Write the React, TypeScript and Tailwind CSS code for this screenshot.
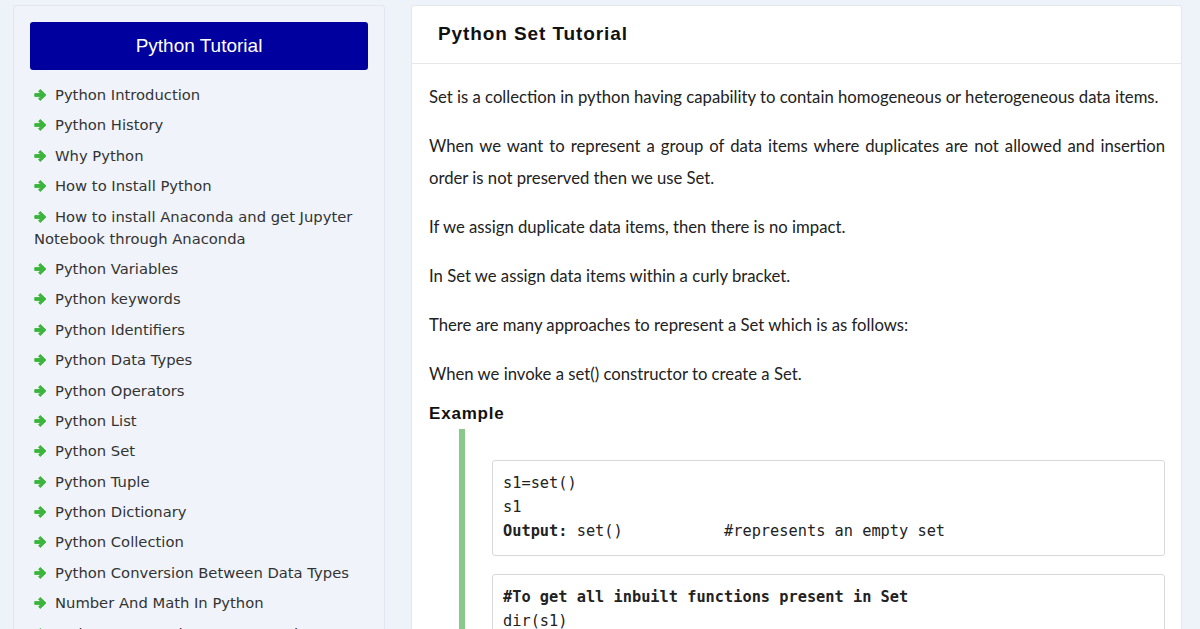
import React from "react";

const items: string[] = [
  "Python Introduction",
  "Python History",
  "Why Python",
  "How to Install Python",
  "How to install Anaconda and get Jupyter Notebook through Anaconda",
  "Python Variables",
  "Python keywords",
  "Python Identifiers",
  "Python Data Types",
  "Python Operators",
  "Python List",
  "Python Set",
  "Python Tuple",
  "Python Dictionary",
  "Python Collection",
  "Python Conversion Between Data Types",
  "Number And Math In Python",
  "Python Input And Output Operations",
];

const paras = [
  "Set is a collection in python having capability to contain homogeneous or heterogeneous data items.",
  "When we want to represent a group of data items where duplicates are not allowed and insertion order is not preserved then we use Set.",
  "If we assign duplicate data items, then there is no impact.",
  "In Set we assign data items within a curly bracket.",
  "There are many approaches to represent a Set which is as follows:",
  "When we invoke a set() constructor to create a Set.",
];

function Arrow() {
  return (
    <svg
      width="13"
      height="12"
      viewBox="0 0 13 12"
      className="mr-[8px] inline-block align-[-1px]"
    >
      <path
        d="M0.8 4.6 H7 L4.6 2.2 L6.3 0.6 L11.9 6 L6.3 11.4 L4.6 9.8 L7 7.4 H0.8 Z"
        fill="#3cb53c"
        stroke="#3cb53c"
        strokeWidth="1"
        strokeLinejoin="round"
      />
    </svg>
  );
}

export default function App() {
  return (
    <div className="h-[629px] w-[1200px] overflow-hidden bg-[#eef2f9]">
      <div className="flex items-start gap-[26px] pl-[13px] pt-[5px]">
        <aside className="w-[372px] shrink-0 rounded-[3px] border border-[#e2e7ef] bg-[#f0f4fa] px-[16px] pt-[16px] pb-6">
          <div className="flex h-[48px] w-[338px] items-center justify-center rounded-[3px] bg-[#00009e] text-[19px] text-white [font-family:'Liberation_Sans',Arial,sans-serif]">
            Python Tutorial
          </div>
          <ul className="mt-[14px] pl-[4px] pr-[8px] text-[14.75px] leading-[22px] text-[#333] [font-family:'DejaVu_Sans',Verdana,sans-serif]">
            {items.map((t) => (
              <li key={t} className="mb-[8.4px]">
                <Arrow />
                {t}
              </li>
            ))}
          </ul>
        </aside>
        <main className="h-[700px] w-[771px] shrink-0 rounded-[3px] border border-[#e3e6eb] bg-white">
          <div className="flex h-[58px] items-center border-b border-[#e6e6e6] pl-[26px]">
            <h1 className="text-[19px] font-bold tracking-[0.9px] text-[#111] [font-family:'Liberation_Sans',Arial,sans-serif]">
              Python Set Tutorial
            </h1>
          </div>
          <div className="pl-[17px] pr-[16px] pt-[17px] [font-family:Lato,sans-serif] text-[16.7px] leading-[32px] text-[#222]">
            {paras.map((p, i) => (
              <p key={i} className="mb-[17px] text-justify">
                {p}
              </p>
            ))}
            <h2 className="mt-[-5px] text-[17px] font-bold leading-[24px] tracking-[0.8px] text-[#111] [font-family:'Liberation_Sans',Arial,sans-serif]">
              Example
            </h2>
            <div className="ml-[30px] mt-[3px] border-l-[6px] border-[#88c888] pl-[27px] pt-[31px] pb-10">
              <div className="rounded-[3px] border border-[#d8d8d8] px-[10px] pt-[10px] pb-[12px] text-[15.3px] leading-[24px] text-[#222] [font-family:'DejaVu_Sans_Mono',Consolas,monospace] whitespace-pre">
                <div>s1=set()</div>
                <div>s1</div>
                <div>
                  <b>Output:</b> set()           #represents an empty set
                </div>
              </div>
              <div className="mt-[18px] rounded-[3px] border border-[#d8d8d8] px-[10px] pt-[10px] pb-[12px] text-[15.3px] leading-[24px] text-[#222] [font-family:'DejaVu_Sans_Mono',Consolas,monospace] whitespace-pre">
                <div className="font-bold">#To get all inbuilt functions present in Set</div>
                <div>dir(s1)</div>
                <div>['__and__', '__class__', '__contains__']</div>
              </div>
            </div>
          </div>
        </main>
      </div>
    </div>
  );
}
